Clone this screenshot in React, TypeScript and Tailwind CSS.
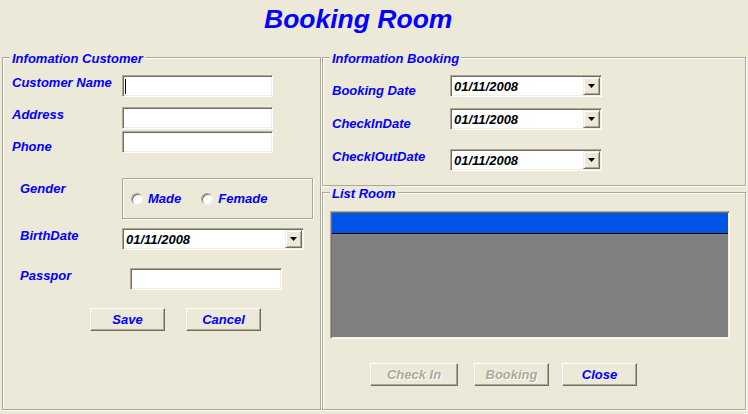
import type { ReactNode } from 'react'

// Windows classic-style booking form

function GroupBox({
  title,
  className,
  children,
}: {
  title?: string
  className?: string
  children: ReactNode
}) {
  return (
    <div
      className={`relative border border-[#aca899] shadow-[inset_1px_1px_0_#fff,1px_1px_0_#fff] ${className ?? ''}`}
    >
      {title && (
        <span className="absolute -top-[7px] left-[7px] bg-[#ece9d8] px-[2px] leading-[15px]">
          {title}
        </span>
      )}
      {children}
    </div>
  )
}

function TextBox({ className, caret }: { className?: string; caret?: boolean }) {
  return (
    <div
      className={`flex h-[22px] items-center border border-t-[#aca899] border-l-[#aca899] border-b-white border-r-white bg-white pl-[2px] shadow-[inset_1px_1px_0_#716f64,inset_-1px_-1px_0_#f1efe2] ${className ?? ''}`}
    >
      {caret && <span className="h-[15px] w-px bg-black" />}
    </div>
  )
}

function DatePicker({ className }: { className?: string }) {
  return (
    <div
      className={`flex h-[22px] items-center border border-t-[#aca899] border-l-[#aca899] border-b-white border-r-white bg-white p-px shadow-[inset_1px_1px_0_#716f64,inset_-1px_-1px_0_#f1efe2] ${className ?? ''}`}
    >
      <span className="flex-1 pl-[2px] text-[13px] leading-[15px] text-black">01/11/2008</span>
      <span className="flex h-[18px] w-[17px] items-center justify-center border border-t-[#f1efe2] border-l-[#f1efe2] border-b-[#716f64] border-r-[#716f64] bg-[#ece9d8] shadow-[inset_1px_1px_0_#fff,inset_-1px_-1px_0_#aca899]">
        <svg width="7" height="4" viewBox="0 0 7 4">
          <path d="M0 0h7L3.5 4z" fill="#000" />
        </svg>
      </span>
    </div>
  )
}

function Button({
  label,
  disabled,
  className,
}: {
  label: string
  disabled?: boolean
  className?: string
}) {
  return (
    <div
      className={`flex h-[23px] items-center justify-center border border-t-white border-l-white border-b-[#716f64] border-r-[#716f64] bg-[#ece9d8] shadow-[inset_-1px_-1px_0_#aca899] ${
        disabled ? 'text-[#aca899] [text-shadow:1px_1px_0_#fff]' : ''
      } ${className ?? ''}`}
    >
      {label}
    </div>
  )
}

function Radio({ label }: { label: string }) {
  return (
    <div className="flex items-center gap-[5px]">
      <span className="h-[12px] w-[12px] rounded-full border border-[#aca899] border-b-[#f1efe2] border-r-[#f1efe2] bg-white shadow-[inset_1px_1px_0_#716f64]" />
      <span>{label}</span>
    </div>
  )
}

export default function App() {
  return (
    <div className="h-[414px] w-[748px] overflow-hidden bg-[#ece9d8] font-['Liberation_Sans',Arial,sans-serif] text-[13px] font-bold italic leading-[15px] text-[#0000ff]">
      {/* Title */}
      <h1 className="h-[57px] pl-[264px] pt-[4px] text-[26.5px] leading-[30px]">Booking Room</h1>

      <div className="flex gap-px pl-[2px]">
        {/* ── Left: customer ─────────────────────────── */}
        <GroupBox title="Infomation Customer" className="h-[353px] w-[319px] pl-[9px]">
          <div className="mt-[17px] flex items-start">
            <span className="w-[110px]">Customer Name</span>
            <TextBox caret className="w-[151px]" />
          </div>
          <div className="mt-[10px] flex items-start">
            <span className="w-[110px]">Address</span>
            <TextBox className="w-[151px]" />
          </div>
          <div className="mt-[2px] flex items-start">
            <span className="mt-[8px] w-[110px]">Phone</span>
            <TextBox className="w-[151px]" />
          </div>

          <div className="mt-[24px] flex items-start">
            <span className="ml-2 mt-[3px] w-[102px]">Gender</span>
            <div className="flex h-[41px] w-[191px] items-center gap-[20px] border border-[#aca899] pl-[8px] shadow-[inset_1px_1px_0_#fff,1px_1px_0_#fff]">
              <Radio label="Made" />
              <Radio label="Femade" />
            </div>
          </div>

          <div className="mt-[9px] flex items-start">
            <span className="ml-2 w-[102px]">BirthDate</span>
            <DatePicker className="w-[182px]" />
          </div>

          <div className="mt-[18px] flex items-start">
            <span className="ml-2 w-[110px]">Passpor</span>
            <TextBox className="w-[152px]" />
          </div>

          <div className="mt-[18px] flex gap-[21px] pl-[78px]">
            <Button label="Save" className="w-[75px]" />
            <Button label="Cancel" className="w-[75px]" />
          </div>
        </GroupBox>

        {/* ── Right: booking + rooms ─────────────────── */}
        <div className="flex w-[424px] flex-col gap-[6px]">
          <GroupBox title="Information Booking" className="h-[129px] pl-[9px]">
            <div className="mt-[17px] flex items-start">
              <span className="mt-[8px] w-[118px]">Booking Date</span>
              <DatePicker className="w-[152px]" />
            </div>
            <div className="mt-[10px] flex items-start">
              <span className="mt-[8px] w-[118px]">CheckInDate</span>
              <DatePicker className="w-[152px]" />
            </div>
            <div className="mt-[18px] flex items-start">
              <span className="w-[118px]">CheckIOutDate</span>
              <DatePicker className="w-[152px]" />
            </div>
          </GroupBox>

          <GroupBox title="List Room" className="h-[218px]">
            <div className="ml-[7px] mt-[18px] flex h-[128px] w-[400px] flex-col border border-t-[#aca899] border-l-[#aca899] border-b-white border-r-white p-px shadow-[inset_1px_1px_0_#716f64,inset_-1px_-1px_0_#f1efe2]">
              <div className="h-[21px] border-b border-black bg-[#0055e5]" />
              <div className="flex-1 bg-[#808080]" />
            </div>
            <div className="mt-[24px] flex pl-[47px]">
              <Button label="Check In" disabled className="w-[88px]" />
              <Button label="Booking" disabled className="ml-[16px] w-[75px]" />
              <Button label="Close" className="ml-[13px] w-[75px]" />
            </div>
          </GroupBox>
        </div>
      </div>
    </div>
  )
}
